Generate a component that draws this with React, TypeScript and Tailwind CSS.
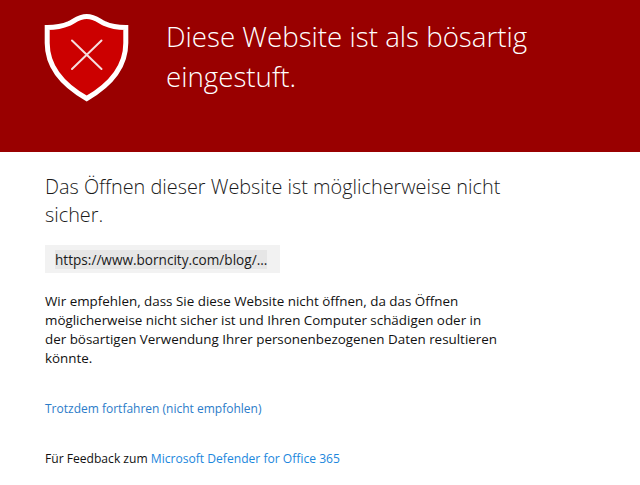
const sans = "font-['Open_Sans','Noto_Sans',sans-serif]";

const Shield = () => (
  <svg width="86" height="90" viewBox="0 0 86 90" className="shrink-0">
    <path
      d="M43.7 3.5C36 3.5 32 7.5 26 10.5C19 13.5 11 14.5 4.2 14.5V30C4.2 55 20 72 43.7 85.5C67 72 82.8 55 82.8 30V14.5C76 14.5 68 13.5 61.5 10.5C55.5 7.5 51.5 3.5 43.7 3.5Z"
      fill="#cc0000"
      stroke="#ffffff"
      strokeWidth="5"
    />
    <path d="M29 27.5L58.5 56M58.5 27.5L29 56" stroke="#f6dede" strokeWidth="2" strokeLinecap="round" fill="none" />
  </svg>
);

export default function App() {
  return (
    <div className={`h-[485px] w-[640px] overflow-hidden bg-white ${sans}`}>
      <div className="flex h-[152px] items-start gap-[37px] bg-[#990000] pl-[43px] pt-[13px]">
        <Shield />
        <h1 className="mt-[3px] w-[400px] text-[27.7px] leading-[40px] font-light text-white">
          Diese Website ist als bösartig eingestuft.
        </h1>
      </div>
      <div className="pl-[45px] pt-[21px]">
        <h2 className="w-[480px] text-[19.85px] leading-[28px] font-light text-[#1a1a1a]">
          Das Öffnen dieser Website ist möglicherweise nicht sicher.
        </h2>
        <div className="mt-[16px] flex h-[28px] w-[235px] items-center bg-[#f2f2f2] pl-[10px]">
          <span className="bg-[#e6e6e6] text-[13.6px] leading-[19px] text-[#1a1a1a]">https://www.borncity.com/blog/...</span>
        </div>
        <p className="mt-[19px] w-[456px] text-[13.4px] leading-[19px] text-[#111111]">
          Wir empfehlen, dass Sie diese Website nicht öffnen, da das Öffnen möglicherweise nicht sicher ist und Ihren Computer schädigen oder in der bösartigen Verwendung Ihrer personenbezogenen Daten resultieren könnte.
        </p>
        <a className="mt-[32px] block text-[12px] leading-[18px] text-[#2b7cc9]">Trotzdem fortfahren (nicht empfohlen)</a>
        <p className="mt-[32px] text-[12.1px] leading-[18px] text-[#111111]">
          Für Feedback zum <a className="text-[#1b87dd]">Microsoft Defender for Office 365</a>
        </p>
      </div>
    </div>
  );
}
